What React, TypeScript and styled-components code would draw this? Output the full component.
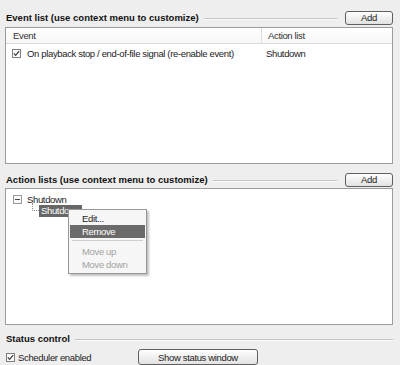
import React from 'react';
import styled, {createGlobalStyle} from 'styled-components';

const GlobalStyle = createGlobalStyle`
  html, body {
    margin: 0;
    padding: 0;
    background: #eeeeee;
  }
  body {
    font-family: "Liberation Sans", Arial, sans-serif;
    font-size: 9.5px;
    letter-spacing: -0.35px;
    color: #1c1c1c;
  }
`;

const Page = styled.div`
  width: 388px;
  height: 365px;
  padding: 10px 7px 0 5px;
  box-sizing: content-box;
  display: flex;
  flex-direction: column;
  overflow: hidden;
`;

const SectionHead = styled.div<{ $top?: number }>`
  display: flex;
  align-items: center;
  height: 15px;
  margin-top: ${p => p.$top ?? 0}px;
  padding-left: 1px;
`;

const Title = styled.span`
  font-weight: bold;
  letter-spacing: 0;
  white-space: nowrap;
  color: #111;
`;

const Rule = styled.div<{ $right?: number }>`
  flex: 1;
  height: 1px;
  margin: 1px ${p => p.$right ?? 8}px 0 5px;
  background: #c4c4c4;
  box-shadow: 0 1px 0 #fafafa;
`;

const Button = styled.button<{ $w: number; $h: number }>`
  width: ${p => p.$w}px;
  height: ${p => p.$h}px;
  padding: 0;
  border: 1px solid #5f5f5f;
  border-radius: 3px;
  background: linear-gradient(#ffffff, #f0f0f0 50%, #e2e2e2);
  font-family: inherit;
  font-size: 9.5px;
  letter-spacing: -0.35px;
  color: #1c1c1c;
  flex-shrink: 0;
`;

const Box = styled.div<{ $top: number }>`
  position: relative;
  margin-top: ${p => p.$top}px;
  height: 137px;
  box-sizing: border-box;
  border: 1px solid #9c9c9c;
  background: #ffffff;
`;

const HeaderRow = styled.div`
  display: grid;
  grid-template-columns: 256px 1fr;
  height: 15px;
  border-bottom: 1px solid #dadada;
  background: linear-gradient(#ffffff, #f7f7f7);
`;

const HeaderCell = styled.div<{ $pad: number; $sep?: boolean }>`
  display: flex;
  align-items: center;
  padding-left: ${p => p.$pad}px;
  border-right: ${p => (p.$sep ? '1px solid #dcdcdc' : 'none')};
  color: #333;
`;

const DataRow = styled.div`
  display: grid;
  grid-template-columns: 256px 1fr;
  height: 12px;
  margin-top: 3px;
  align-items: center;
`;

const Cell = styled.div<{ $pad: number }>`
  display: flex;
  align-items: center;
  gap: 6px;
  padding-left: ${p => p.$pad}px;
  white-space: nowrap;
`;

const Check = styled.span`
  display: inline-flex;
  align-items: center;
  justify-content: center;
  width: 9px;
  height: 9px;
  box-sizing: border-box;
  border: 1px solid #808080;
  background: #fbfbfb;
  flex-shrink: 0;
`;

const Tree = styled.div`
  padding: 4px 0 0 7px;
`;

const TreeRow = styled.div<{ $indent: number }>`
  display: flex;
  align-items: center;
  height: 12px;
  padding-left: ${p => p.$indent}px;
`;

const Expander = styled.span`
  display: inline-flex;
  align-items: center;
  justify-content: center;
  width: 9px;
  height: 9px;
  box-sizing: border-box;
  border: 1px solid #9a9a9a;
  margin-right: 5px;
  background: #fafafa;
  &:after {
    content: "";
    width: 5px;
    height: 1px;
    background: #444;
  }
`;

const Connector = styled.span`
  width: 6px;
  height: 7px;
  margin: -8px 0 0 0;
  border-left: 1px dotted #8a8a8a;
  border-bottom: 1px dotted #8a8a8a;
`;

const Selected = styled.span`
  height: 12px;
  line-height: 12px;
  padding: 0 2px;
  background: #676767;
  color: #ffffff;
`;

const Menu = styled.div`
  position: absolute;
  left: 62px;
  top: 20px;
  width: 79px;
  padding: 2px 1px;
  box-sizing: border-box;
  border: 1px solid #979797;
  background: #f6f6f6;
  box-shadow: 2px 2px 2px rgba(0, 0, 0, 0.25);
`;

const MenuItem = styled.div<{ $active?: boolean; $disabled?: boolean }>`
  height: 13px;
  line-height: 13px;
  padding-left: 12px;
  background: ${p => (p.$active ? '#6b6b6b' : 'transparent')};
  color: ${p => (p.$active ? '#ffffff' : p.$disabled ? '#a3a3a3' : '#1c1c1c')};
`;

const MenuSep = styled.div`
  height: 1px;
  margin: 2px 2px 4px;
  background: #cfcfcf;
`;

const BottomRow = styled.div`
  display: flex;
  align-items: center;
  height: 18px;
  margin-top: 2px;
  padding-left: 1px;
`;

const CheckLabel = styled.label`
  display: flex;
  align-items: center;
  gap: 3px;
  width: 132px;
`;

const Tick = () => (
	<svg width="7" height="7" viewBox="0 0 7 7">
		<path d="M0.8 3.4 L2.6 5.3 L6.2 1.2" fill="none" stroke="#3a3a3a" strokeWidth="1.2"/>
	</svg>
);

export default function App() {
	return (
		<>
			<GlobalStyle/>
			<Page>
				<SectionHead $top={0}>
					<Title>Event list (use context menu to customize)</Title>
					<Rule/>
					<Button $w={48} $h={14}>Add</Button>
				</SectionHead>
				<Box $top={2}>
					<HeaderRow>
						<HeaderCell $pad={7} $sep>Event</HeaderCell>
						<HeaderCell $pad={6}>Action list</HeaderCell>
					</HeaderRow>
					<DataRow>
						<Cell $pad={6}>
							<Check><Tick/></Check>
							On playback stop / end-of-file signal (re-enable event)
						</Cell>
						<Cell $pad={4}>Shutdown</Cell>
					</DataRow>
				</Box>

				<SectionHead $top={8}>
					<Title>Action lists (use context menu to customize)</Title>
					<Rule/>
					<Button $w={48} $h={14}>Add</Button>
				</SectionHead>
				<Box $top={1}>
					<Tree>
						<TreeRow $indent={0}>
							<Expander/>
							Shutdown
						</TreeRow>
						<TreeRow $indent={19}>
							<Connector/>
							<Selected>Shutdown</Selected>
						</TreeRow>
					</Tree>
					<Menu>
						<MenuItem>Edit...</MenuItem>
						<MenuItem $active>Remove</MenuItem>
						<MenuSep/>
						<MenuItem $disabled>Move up</MenuItem>
						<MenuItem $disabled>Move down</MenuItem>
					</Menu>
				</Box>

				<SectionHead $top={6}>
					<Title>Status control</Title>
					<Rule $right={0}/>
				</SectionHead>
				<BottomRow>
					<CheckLabel>
						<Check><Tick/></Check>
						Scheduler enabled
					</CheckLabel>
					<Button $w={120} $h={16}>Show status window</Button>
				</BottomRow>
			</Page>
		</>
	);
}
